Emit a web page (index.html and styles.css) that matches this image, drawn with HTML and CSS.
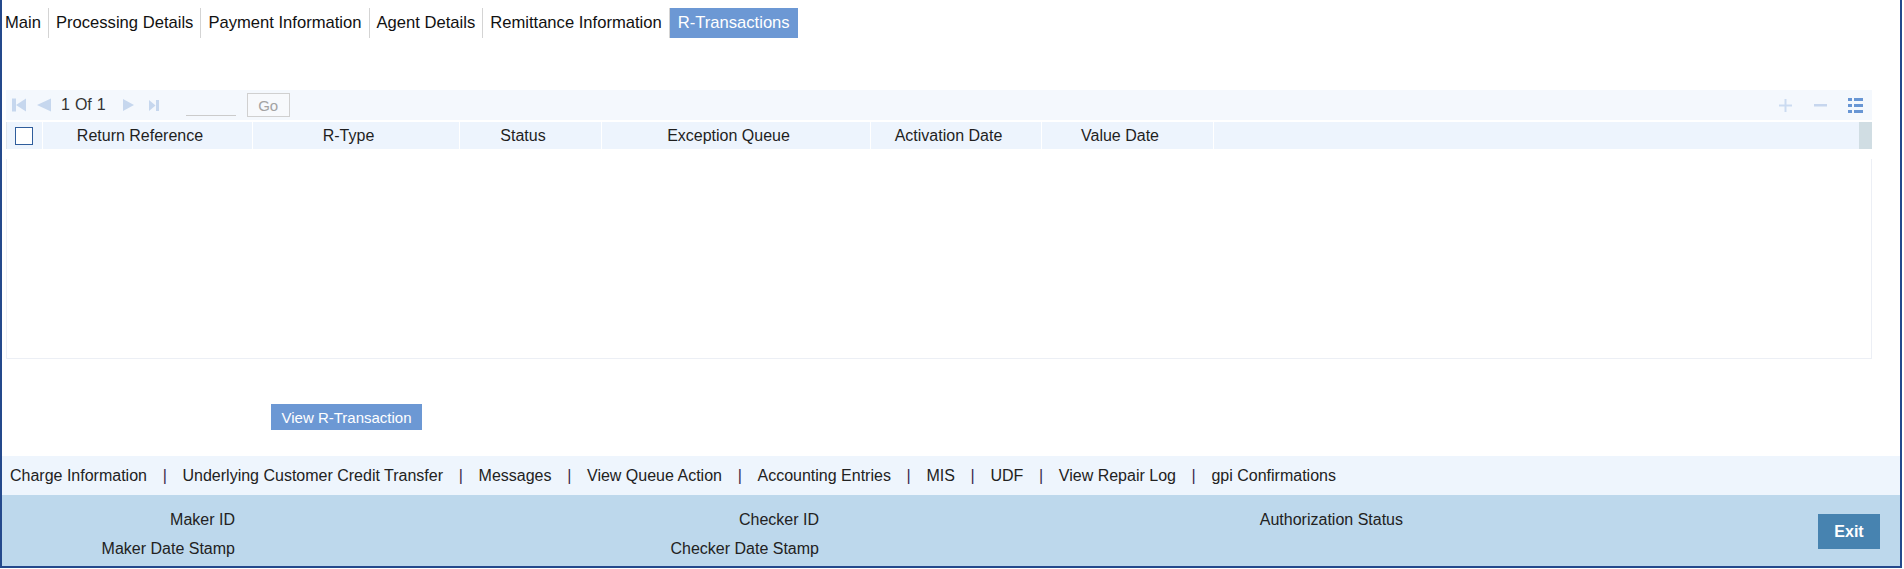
FILE: index.html
```html
<!DOCTYPE html>
<html lang="en">
<head>
    <meta charset="UTF-8">
    <title>R-Transactions</title>
    <link rel="stylesheet" href="styles.css">
</head>
<body>
<div class="frame">
    <ul class="tabs">
        <li class="tab first">Main</li>
        <li class="tab">Processing Details</li>
        <li class="tab">Payment Information</li>
        <li class="tab">Agent Details</li>
        <li class="tab">Remittance Information</li>
        <li class="tab active">R-Transactions</li>
    </ul>

    <!-- R-Transactions grid -->
    <div class="grid">
        <div class="grid-toolbar">
            <svg class="nav nav-first" width="14" height="14" viewBox="0 0 14 14"><rect x="0" y="0.5" width="4" height="13"/><polygon points="14,0.5 4,7 14,13.5"/></svg>
            <svg class="nav nav-prev" width="14" height="14" viewBox="0 0 14 14"><polygon points="14,0.5 0,7 14,13.5"/></svg>
            <span class="pager">1</span><span class="pager">Of</span><span class="pager">1</span>
            <svg class="nav nav-next" width="11" height="12" viewBox="0 0 11 12"><polygon points="0,0 11,6 0,12"/></svg>
            <svg class="nav nav-last" width="10" height="11" viewBox="0 0 10 11"><polygon points="0,0 6.5,5.5 0,11"/><rect x="7" y="0" width="3" height="11"/></svg>
            <input class="page-input" type="text">
            <button class="go-btn">Go</button>
            <span class="tool-right">
                <svg class="tool-add" width="13" height="13" viewBox="0 0 13 13"><rect x="5.5" y="0" width="2" height="13"/><rect x="0" y="5.5" width="13" height="2"/></svg>
                <svg class="tool-del" width="13" height="3" viewBox="0 0 13 3"><rect x="0" y="0" width="13" height="2.5"/></svg>
                <svg class="tool-list" width="15" height="15" viewBox="0 0 15 15"><rect x="0" y="0" width="4" height="3"/><rect x="6" y="0" width="9" height="3"/><rect x="0" y="6" width="4" height="3"/><rect x="6" y="6" width="9" height="3"/><rect x="0" y="12" width="4" height="3"/><rect x="6" y="12" width="9" height="3"/></svg>
            </span>
        </div>
        <div class="grid-head">
            <div class="col col-check"><span class="checkbox"></span></div>
            <div class="col col-ref">Return Reference</div>
            <div class="col col-type">R-Type</div>
            <div class="col col-status">Status</div>
            <div class="col col-queue">Exception Queue</div>
            <div class="col col-act">Activation Date</div>
            <div class="col col-value">Value Date</div>
            <div class="col col-fill"></div>
            <div class="col-scroll"></div>
        </div>
        <div class="grid-body"></div>
    </div>

    <div class="actions">
        <button class="btn-primary">View R-Transaction</button>
    </div>

    <div class="sub-links">
        <span>Charge Information</span><span class="sep">|</span>
        <span>Underlying Customer Credit Transfer</span><span class="sep">|</span>
        <span>Messages</span><span class="sep">|</span>
        <span>View Queue Action</span><span class="sep">|</span>
        <span>Accounting Entries</span><span class="sep">|</span>
        <span>MIS</span><span class="sep">|</span>
        <span>UDF</span><span class="sep">|</span>
        <span>View Repair Log</span><span class="sep">|</span>
        <span>gpi Confirmations</span>
    </div>

    <div class="audit">
        <div class="audit-col">
            <div class="audit-label">Maker ID</div>
            <div class="audit-label">Maker Date Stamp</div>
        </div>
        <div class="audit-col">
            <div class="audit-label">Checker ID</div>
            <div class="audit-label">Checker Date Stamp</div>
        </div>
        <div class="audit-col">
            <div class="audit-label">Authorization Status</div>
        </div>
        <button class="exit-btn">Exit</button>
    </div>
</div>
</body>
</html>
```

FILE: styles.css
```css
body {
    margin: 0;
    font-family: "Liberation Sans", Arial, sans-serif;
    font-size: 16px;
    color: #222;
    background: #fff;
}
.frame {
    box-sizing: border-box;
    width: 1902px;
    height: 568px;
    border: 2px solid #24498c;
    border-top: 0;
}

/* tabs */
.tabs {
    display: flex;
    list-style: none;
    margin: 0;
    padding: 8px 0 0 0;
    font-size: 16.6px;
}
.tab {
    padding: 0 7px;
    line-height: 30px;
    height: 30px;
    border-right: 1px solid #d4d4d4;
    color: #111;
    white-space: nowrap;
}
.tab.first {
    padding-left: 3px;
}
.tab.active {
    background: #6c98d4;
    color: #fff;
    border-right: 0;
    padding: 0 8px;
}

/* grid */
.grid {
    margin: 52px 28px 0 4px;
}
.grid-toolbar {
    display: flex;
    align-items: center;
    height: 30px;
    padding: 0 9px 0 6px;
    background: #f4f8fd;
}
.nav {
    fill: #c6d7ee;
    flex: none;
}
.nav-prev {
    margin-left: 11px;
}
.pager {
    color: #333;
    margin-right: 5px;
}
.pager:first-of-type {
    margin-left: 10px;
}
.nav-next {
    margin-left: 12px;
}
.nav-last {
    margin-left: 15px;
}
.page-input {
    width: 50px;
    height: 22px;
    margin: 0 0 4px 27px;
    padding: 0;
    border: 0;
    border-bottom: 1px solid #cbcbcb;
    background: transparent;
    align-self: flex-end;
}
.go-btn {
    width: 43px;
    height: 24px;
    margin-left: 11px;
    padding: 0;
    border: 1px solid #d0d0d0;
    background: #f7f9fc;
    color: #a3a3a3;
    font-family: inherit;
    font-size: 15px;
}
.tool-right {
    margin-left: auto;
    display: flex;
    align-items: center;
}
.tool-add {
    fill: #cbdbf1;
}
.tool-del {
    fill: #c6d6ee;
    margin-left: 22px;
}
.tool-list {
    fill: #6896d4;
    margin-left: 21px;
}

.grid-head {
    display: flex;
    height: 27px;
    margin-top: 2px;
    background: #edf4fd;
    border-left: 1px solid #dfe5ec;
}
.col {
    box-sizing: border-box;
    flex: none;
    border-right: 1px solid #fff;
    line-height: 27px;
    text-align: center;
    padding-right: 15px;
    color: #1f1f1f;
    white-space: nowrap;
}
.col-check {
    width: 36px;
    padding: 0;
    display: flex;
    align-items: center;
    justify-content: center;
}
.checkbox {
    box-sizing: border-box;
    width: 18px;
    height: 18px;
    border: 1px solid #2f5d9c;
    background: #fff;
    margin-left: -1px;
}
.col-ref { width: 210px; }
.col-type { width: 207px; }
.col-status { width: 142px; }
.col-queue { width: 269px; }
.col-act { width: 171px; }
.col-value { width: 172px; }
.col-fill {
    flex: 1;
    border-right: 0;
}
.col-scroll {
    width: 13px;
    background: #d0dde3;
}
.grid-body {
    height: 199px;
    margin-top: 10px;
    border: 1px solid #eceff5;
    border-top: 0;
}

/* actions */
.actions {
    margin-top: 45px;
    padding-left: 269px;
    height: 26px;
}
.btn-primary {
    height: 26px;
    padding: 0 10.5px;
    border: 0;
    background: #6c98d4;
    color: #fff;
    font-family: inherit;
    font-size: 15px;
}

/* sub screens */
.sub-links {
    display: flex;
    margin-top: 26px;
    height: 39px;
    line-height: 39px;
    padding-left: 8px;
    background: #eef5fd;
    white-space: nowrap;
}
.sub-links .sep {
    margin: 0 15.7px;
    color: #3a2a4a;
}

/* audit */
.audit {
    box-sizing: border-box;
    display: flex;
    height: 71px;
    padding-top: 10px;
    background: #bdd8ec;
}
.audit-col {
    width: 584px;
}
.audit-label {
    width: 233px;
    text-align: right;
    line-height: 29px;
    color: #222;
    white-space: nowrap;
}
.exit-btn {
    align-self: flex-start;
    margin: 9px 20px 0 auto;
    width: 62px;
    height: 35px;
    padding: 0;
    border: 0;
    background: #4783b0;
    color: #fff;
    font-family: inherit;
    font-size: 16px;
    font-weight: bold;
}
```
